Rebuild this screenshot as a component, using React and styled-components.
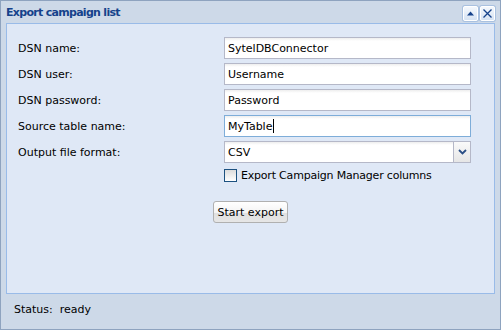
import React from "react";
import styled, { createGlobalStyle } from "styled-components";

const Global = createGlobalStyle`
  html, body { margin: 0; padding: 0; background: #ffffff; }
  body { font-family: "DejaVu Sans", Tahoma, sans-serif; }
`;

const Win = styled.div`
  box-sizing: border-box;
  width: 501px;
  height: 330px;
  border: 1px solid #8ea3bf;
  background: #cdd9e8;
  display: flex;
  flex-direction: column;
  padding: 0 5px;
`;

const TitleBar = styled.div`
  height: 22px;
  display: flex;
  align-items: center;
  justify-content: space-between;
`;

const Title = styled.div`
  font-family: "DejaVu Sans", Tahoma, sans-serif;
  font-weight: bold;
  font-size: 11px;
  color: #15428b;
  letter-spacing: -0.7px;
`;

const Tools = styled.div`
  display: flex;
  gap: 2px;
  margin-top: 2px;
`;

const ToolBtn = styled.div`
  box-sizing: border-box;
  width: 15px;
  height: 15px;
  border: 1px solid #ffffff;
  border-radius: 2px;
  background: linear-gradient(#f4f8fd, #d6e3f3);
  box-shadow: 0 0 0 1px #a9c1e0;
  display: flex;
  align-items: center;
  justify-content: center;
`;

const Body = styled.div`
  flex: 1;
  border: 1px solid #99bbe8;
  background: #dfe8f6;
  padding: 13px 22px 0 11px;
  display: flex;
  flex-direction: column;
`;

const Row = styled.div`
  display: flex;
  align-items: center;
  height: 22px;
  margin-bottom: 4px;
`;

const Label = styled.div`
  width: 206px;
  font-size: 11px;
  color: #000;
`;

const Field = styled.div`
  box-sizing: border-box;
  width: 247px;
  height: 22px;
  border: 1px solid ${(p) => (p.$focus ? "#7eadd9" : "#b5b8c8")};
  background: linear-gradient(#eeeeee 0, #ffffff 3px, #ffffff 100%);
  font-size: 11px;
  color: #000;
  padding: 0 3px;
  display: flex;
  align-items: center;
  position: relative;
`;

const Caret = styled.span`
  display: inline-block;
  width: 1px;
  height: 14px;
  background: #000;
  margin-left: 1px;
`;

const Trigger = styled.div`
  position: absolute;
  top: -1px;
  right: -1px;
  box-sizing: border-box;
  width: 18px;
  height: 22px;
  border: 1px solid #b5b8c8;
  background: linear-gradient(#fafafa, #e6e6e6);
  display: flex;
  align-items: center;
  justify-content: center;
`;

const CheckRow = styled.div`
  display: flex;
  align-items: center;
  gap: 4px;
  margin: 2px 0 0 206px;
  font-size: 11px;
  color: #000;
  letter-spacing: -0.2px;
`;

const Box = styled.div`
  box-sizing: border-box;
  width: 13px;
  height: 13px;
  border: 1px solid #1c5180;
  background: linear-gradient(#dcdcdc, #ffffff);
`;

const BtnWrap = styled.div`
  display: flex;
  justify-content: center;
  margin-top: 19px;
  padding-left: 11px;
`;

const Button = styled.div`
  box-sizing: border-box;
  width: 75px;
  height: 22px;
  border: 1px solid #b0b0b0;
  border-radius: 3px;
  background: linear-gradient(#ffffff 0%, #f3f3f3 55%, #e0e0e0 56%, #e6e6e6 100%);
  font-size: 11px;
  color: #000;
  display: flex;
  align-items: center;
  justify-content: center;
`;

const Status = styled.div`
  height: 35px;
  box-sizing: border-box;
  padding: 0 0 4px 8px;
  display: flex;
  align-items: center;
  font-size: 11px;
  color: #000;
  white-space: pre;
`;

const fields = [
  ["DSN name:", "SytelDBConnector"],
  ["DSN user:", "Username"],
  ["DSN password:", "Password"],
  ["Source table name:", "MyTable", true],
];

export default function App() {
  return (
    <>
      <Global />
      <Win>
        <TitleBar>
          <Title>Export campaign list</Title>
          <Tools>
            <ToolBtn>
              <svg width="9" height="9" viewBox="0 0 9 9">
                <path d="M1 6.5 L4.5 2.5 L8 6.5 Z" fill="#15428b" />
              </svg>
            </ToolBtn>
            <ToolBtn>
              <svg width="11" height="11" viewBox="0 0 11 11">
                <path d="M1.5 1.5 L9.5 9.5 M9.5 1.5 L1.5 9.5" stroke="#15428b" strokeWidth="1.3" />
              </svg>
            </ToolBtn>
          </Tools>
        </TitleBar>
        <Body>
          {fields.map(([l, v, f]) => (
            <Row key={l}>
              <Label>{l}</Label>
              <Field $focus={f}>
                {v}
                {f && <Caret />}
              </Field>
            </Row>
          ))}
          <Row>
            <Label>Output file format:</Label>
            <Field>
              CSV
              <Trigger>
                <svg width="9" height="6" viewBox="0 0 9 6">
                  <path d="M1 1 L4.5 4.5 L8 1" stroke="#2b4f86" strokeWidth="1.8" fill="none" />
                </svg>
              </Trigger>
            </Field>
          </Row>
          <CheckRow>
            <Box />
            Export Campaign Manager columns
          </CheckRow>
          <BtnWrap>
            <Button>Start export</Button>
          </BtnWrap>
        </Body>
        <Status>Status:  ready</Status>
      </Win>
    </>
  );
}
